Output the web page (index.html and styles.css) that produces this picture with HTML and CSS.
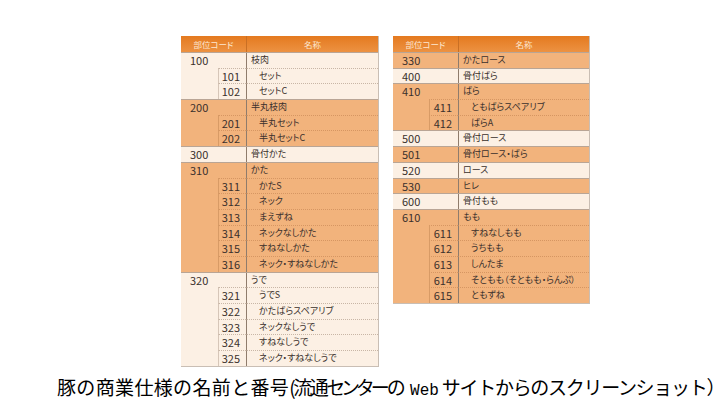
FILE: index.html
```html
<!DOCTYPE html>
<html lang="ja">
<head>
<meta charset="utf-8">
<link rel="stylesheet" href="styles.css">
</head>
<body>
<div class="page">
  <div class="tables">
    <div class="tbl tbl-left">
      <div class="head"><div class="h-code">部位コード</div><div class="h-name">名称</div></div>
      <div class="grp light">
        <div class="row main"><div class="code">100</div><div class="name">枝肉</div></div>
        <div class="row sub"><div class="ind"></div><div class="scode">101</div><div class="sname">セット</div></div>
        <div class="row sub"><div class="ind"></div><div class="scode">102</div><div class="sname">セットC</div></div>
      </div>
      <div class="grp dark">
        <div class="row main"><div class="code">200</div><div class="name">半丸枝肉</div></div>
        <div class="row sub"><div class="ind"></div><div class="scode">201</div><div class="sname">半丸セット</div></div>
        <div class="row sub"><div class="ind"></div><div class="scode">202</div><div class="sname">半丸セットC</div></div>
      </div>
      <div class="grp light">
        <div class="row main"><div class="code">300</div><div class="name">骨付かた</div></div>
      </div>
      <div class="grp dark">
        <div class="row main"><div class="code">310</div><div class="name">かた</div></div>
        <div class="row sub"><div class="ind"></div><div class="scode">311</div><div class="sname">かたS</div></div>
        <div class="row sub"><div class="ind"></div><div class="scode">312</div><div class="sname">ネック</div></div>
        <div class="row sub"><div class="ind"></div><div class="scode">313</div><div class="sname">まえずね</div></div>
        <div class="row sub"><div class="ind"></div><div class="scode">314</div><div class="sname">ネックなしかた</div></div>
        <div class="row sub"><div class="ind"></div><div class="scode">315</div><div class="sname">すねなしかた</div></div>
        <div class="row sub"><div class="ind"></div><div class="scode">316</div><div class="sname">ネック・すねなしかた</div></div>
      </div>
      <div class="grp light">
        <div class="row main"><div class="code">320</div><div class="name">うで</div></div>
        <div class="row sub"><div class="ind"></div><div class="scode">321</div><div class="sname">うでS</div></div>
        <div class="row sub"><div class="ind"></div><div class="scode">322</div><div class="sname">かたばらスペアリブ</div></div>
        <div class="row sub"><div class="ind"></div><div class="scode">323</div><div class="sname">ネックなしうで</div></div>
        <div class="row sub"><div class="ind"></div><div class="scode">324</div><div class="sname">すねなしうで</div></div>
        <div class="row sub"><div class="ind"></div><div class="scode">325</div><div class="sname">ネック・すねなしうで</div></div>
      </div>
    </div>

    <div class="tbl tbl-right">
      <div class="head"><div class="h-code">部位コード</div><div class="h-name">名称</div></div>
      <div class="grp dark">
        <div class="row main"><div class="code">330</div><div class="name">かたロース</div></div>
      </div>
      <div class="grp light">
        <div class="row main"><div class="code">400</div><div class="name">骨付ばら</div></div>
      </div>
      <div class="grp dark">
        <div class="row main"><div class="code">410</div><div class="name">ばら</div></div>
        <div class="row sub"><div class="ind"></div><div class="scode">411</div><div class="sname">ともばらスペアリブ</div></div>
        <div class="row sub"><div class="ind"></div><div class="scode">412</div><div class="sname">ばらA</div></div>
      </div>
      <div class="grp light">
        <div class="row main"><div class="code">500</div><div class="name">骨付ロース</div></div>
      </div>
      <div class="grp dark">
        <div class="row main"><div class="code">501</div><div class="name">骨付ロース・ばら</div></div>
      </div>
      <div class="grp light">
        <div class="row main"><div class="code">520</div><div class="name">ロース</div></div>
      </div>
      <div class="grp dark">
        <div class="row main"><div class="code">530</div><div class="name">ヒレ</div></div>
      </div>
      <div class="grp light">
        <div class="row main"><div class="code">600</div><div class="name">骨付もも</div></div>
      </div>
      <div class="grp dark">
        <div class="row main"><div class="code">610</div><div class="name">もも</div></div>
        <div class="row sub"><div class="ind"></div><div class="scode">611</div><div class="sname">すねなしもも</div></div>
        <div class="row sub"><div class="ind"></div><div class="scode">612</div><div class="sname">うちもも</div></div>
        <div class="row sub"><div class="ind"></div><div class="scode">613</div><div class="sname">しんたま</div></div>
        <div class="row sub"><div class="ind"></div><div class="scode">614</div><div class="sname">そともも（そともも・らんぷ）</div></div>
        <div class="row sub"><div class="ind"></div><div class="scode">615</div><div class="sname">ともずね</div></div>
      </div>
    </div>
  </div>
  <p class="caption"><span class="cap-a">豚の商業仕様の名前と番号</span><span class="cap-b">(流通センターの</span><span class="cap-web">Web</span><span class="cap-c">サイトからのスクリーンショット）</span></p>
</div>
</body>
</html>
```

FILE: styles.css
```css
html, body {
  margin: 0;
  padding: 0;
  background: #ffffff;
}

.page {
  width: 728px;
  height: 417px;
  overflow: hidden;
  font-family: "Noto Sans CJK JP", "Noto Sans", sans-serif;
}

.tables {
  display: flex;
  align-items: flex-start;
  gap: 14px;
  padding: 36px 0 0 181px;
}

.tbl {
  background: #fcefe2;
  border-right: 1px solid #c9beb4;
  border-bottom: 1px solid #c9beb4;
  color: #3a302c;
  --rh: 15.7px;
}

.tbl-left { width: 197px; --c1: 37px; --c2: 28px; }
.tbl-right { width: 196px; --c1: 36px; --c2: 29px; }

.head {
  display: grid;
  grid-template-columns: calc(var(--c1) + var(--c2)) 1fr;
  height: 16px;
  background: linear-gradient(#e47a1f, #ec9242);
  color: #fde7d0;
  font-size: 8.5px;
  line-height: 16px;
  text-align: center;
  font-feature-settings: "palt";
}

.h-name {
  border-left: 1px solid #c96f24;
}

.grp.light { background: #fcf0e4; }
.grp.dark { background: #f2b37c; }

.row {
  display: grid;
  grid-template-columns: var(--c1) var(--c2) 1fr;
  height: var(--rh);
  box-sizing: border-box;
}

.row.main {
  border-top: 1px solid #b9a595;
}

.row.main .code {
  grid-column: 1 / span 2;
  font-size: 11px;
  line-height: calc(var(--rh) - 1px);
  padding-left: 9px;
}

.name, .sname {
  border-left: 1px solid #8f7c6c;
  font-size: 9px;
  white-space: nowrap;
  font-feature-settings: "palt";
}

.name { padding-left: 4px; line-height: calc(var(--rh) - 1px); }
.sname { padding-left: 12px; }

.row.sub .scode {
  font-size: 11px;
  text-align: right;
  padding-right: 6px;
  border-left: 1px solid #d6c6b8;
}

.row.sub .scode,
.row.sub .sname {
  border-top: 1px dotted #c8b6a6;
  line-height: calc(var(--rh) - 1px);
}

.grp.dark .row.sub .scode { border-left-color: #d89b66; }
.grp.dark .row.sub .scode,
.grp.dark .row.sub .sname { border-top-color: #d69662; }

.caption {
  margin: 9px 0 0 57px;
  font-size: 19px;
  line-height: 22px;
  color: #000;
  white-space: nowrap;
}

.cap-a { letter-spacing: 0.35px; }

.cap-b {
  font-feature-settings: "palt";
  letter-spacing: -2.4px;
}

.cap-web {
  font-family: "Liberation Mono", "DejaVu Sans Mono", monospace;
  font-size: 16px;
  margin: 0 3px 0 7px;
}

.cap-c { letter-spacing: -1.3px; }
```
